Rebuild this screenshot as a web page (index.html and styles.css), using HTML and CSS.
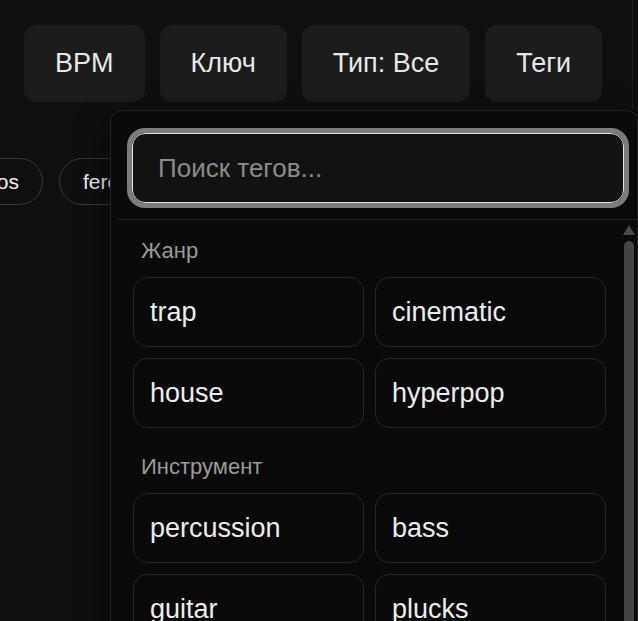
FILE: index.html
```html
<!DOCTYPE html>
<html lang="ru">
<head>
<meta charset="utf-8">
<title>Фильтры</title>
<link rel="stylesheet" href="styles.css">
</head>
<body>
<div class="page">
  <header class="filters">
    <button class="filter-btn">BPM</button>
    <button class="filter-btn">Ключ</button>
    <button class="filter-btn">Тип: Все</button>
    <button class="filter-btn">Теги</button>
  </header>
  <div class="chips">
    <span class="chip">pianos</span>
    <span class="chip">ferocious</span>
    <span class="chip">dark</span>
  </div>

  <div class="dropdown">
    <div class="search">
      <input class="search-input" type="text" placeholder="Поиск тегов..." autofocus>
    </div>
    <div class="dropdown-body">
      <div class="tag-list">
        <section class="group">
          <h3 class="group-title">Жанр</h3>
          <div class="tag-grid">
            <button class="tag">trap</button>
            <button class="tag">cinematic</button>
            <button class="tag">house</button>
            <button class="tag">hyperpop</button>
          </div>
        </section>
        <section class="group">
          <h3 class="group-title">Инструмент</h3>
          <div class="tag-grid">
            <button class="tag">percussion</button>
            <button class="tag">bass</button>
            <button class="tag">guitar</button>
            <button class="tag">plucks</button>
          </div>
        </section>
        <section class="group">
          <h3 class="group-title">Настроение</h3>
          <div class="tag-grid">
            <button class="tag">dark</button>
            <button class="tag">chill</button>
            <button class="tag">happy</button>
            <button class="tag">epic</button>
          </div>
        </section>
      </div>
      <div class="scrollbar" aria-hidden="true">
        <span class="scroll-arrow"></span>
        <span class="scroll-thumb"></span>
      </div>
    </div>
  </div>
</div>
</body>
</html>
```
FILE: styles.css
```css
html, body {
  margin: 0;
  padding: 0;
  height: 100%;
  overflow: hidden;
  background: #0f0f0f;
  color: #ececec;
  font-family: "Liberation Sans", Arial, sans-serif;
}

.page {
  position: relative;
  height: 100%;
}

.filters {
  display: flex;
  gap: 15px;
  width: 608px;
  padding: 25px 0 8px 24px;
  border-right: 1px solid #1d1d1d;
}

.filter-btn {
  font: inherit;
  font-size: 27px;
  line-height: 31px;
  padding: 23px 31px;
  color: #e8e8e8;
  background: #1c1c1c;
  border: none;
  border-radius: 12px;
}

.chips {
  display: flex;
  gap: 16px;
  margin: 48px 0 0 -67px;
}

.chip {
  flex: none;
  font-size: 21px;
  line-height: 23px;
  padding: 11px 23px;
  border: 1px solid #3a3a3a;
  border-radius: 999px;
  color: #f2f2f2;
}

.dropdown {
  position: absolute;
  left: 110px;
  top: 110px;
  width: 519px;
  padding-left: 7px;
  background: #0a0a0a;
  border: 1px solid #232323;
  border-radius: 12px;
  box-shadow: 0 12px 32px rgba(0, 0, 0, 0.6);
}

.search {
  padding: 22px 13px 16px 14px;
  border-bottom: 1px solid #222;
}

.search-input {
  display: block;
  box-sizing: border-box;
  width: 100%;
  height: 70px;
  padding: 0 20px 0 25px;
  font: inherit;
  font-size: 26px;
  color: #eee;
  caret-color: #fff;
  background: #121212;
  border: 1px solid #e2e2e2;
  border-radius: 13px;
  outline: 5px solid #7c7c7c;
}

.search-input::placeholder {
  color: #8c8c8c;
}

.dropdown-body {
  display: flex;
  height: 560px;
}

.tag-list {
  flex: 1;
  overflow: hidden;
  padding: 18px 0 16px 15px;
}

.scrollbar {
  flex: none;
  width: 16px;
  display: flex;
  flex-direction: column;
  align-items: center;
  padding-top: 5px;
}

.scroll-arrow {
  width: 0;
  height: 0;
  border-left: 6px solid transparent;
  border-right: 6px solid transparent;
  border-bottom: 10px solid #4a4a4a;
}

.scroll-thumb {
  margin-top: 6px;
  width: 10px;
  height: 480px;
  border-radius: 5px;
  background: #444;
}

.group + .group {
  margin-top: 26px;
}

.group-title {
  margin: 0 0 14px;
  padding-left: 8px;
  font-size: 22px;
  font-weight: normal;
  line-height: 25px;
  color: #9a9a9a;
}

.tag-grid {
  display: grid;
  grid-template-columns: 231px 231px;
  grid-auto-rows: 70px;
  gap: 11px;
}

.tag {
  font: inherit;
  font-size: 27px;
  text-align: left;
  padding: 0 16px;
  color: #ededed;
  background: transparent;
  border: 1px solid #272727;
  border-radius: 14px;
}
```
